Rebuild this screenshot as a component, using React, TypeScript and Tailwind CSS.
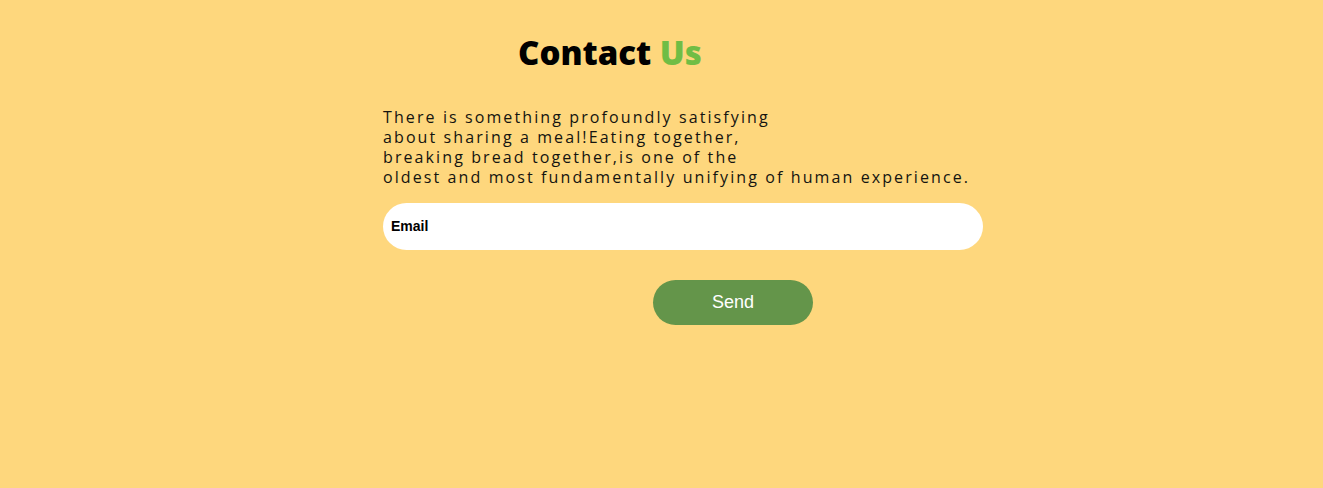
export default function App() {
  return (
    <div className="min-h-[488px] w-full bg-[#fed77d]" style={{ fontFamily: '"Open Sans", "Liberation Sans", sans-serif' }}>
      <div className="ml-[383px] w-[600px] pt-[31px]">
        <h1 className="ml-[135px] text-[33px] font-extrabold leading-[44px] text-black tracking-[0px]">
          Contact <span className="text-[#70bd45]">Us</span>
        </h1>
        <p className="mt-[32px] text-[16px] leading-[20px] tracking-[2.1px] text-[#141410]">
          There is something profoundly satisfying
          <br />
          about sharing a meal!Eating together,
          <br />
          breaking bread together,is one of the
          <br />
          oldest and most fundamentally unifying of human experience.
        </p>
        <div className="mt-[16px] flex h-[47px] items-center rounded-full bg-white pl-[8px]">
          <span className="text-[14px] font-bold text-black" style={{ fontFamily: '"Liberation Sans", Arial, sans-serif' }}>
            Email
          </span>
        </div>
        <button
          className="ml-[270px] mt-[30px] flex h-[45px] w-[160px] items-center justify-center rounded-full bg-[#64954a] text-[18px] text-white"
          style={{ fontFamily: '"Liberation Sans", Arial, sans-serif' }}
        >
          Send
        </button>
      </div>
    </div>
  );
}
